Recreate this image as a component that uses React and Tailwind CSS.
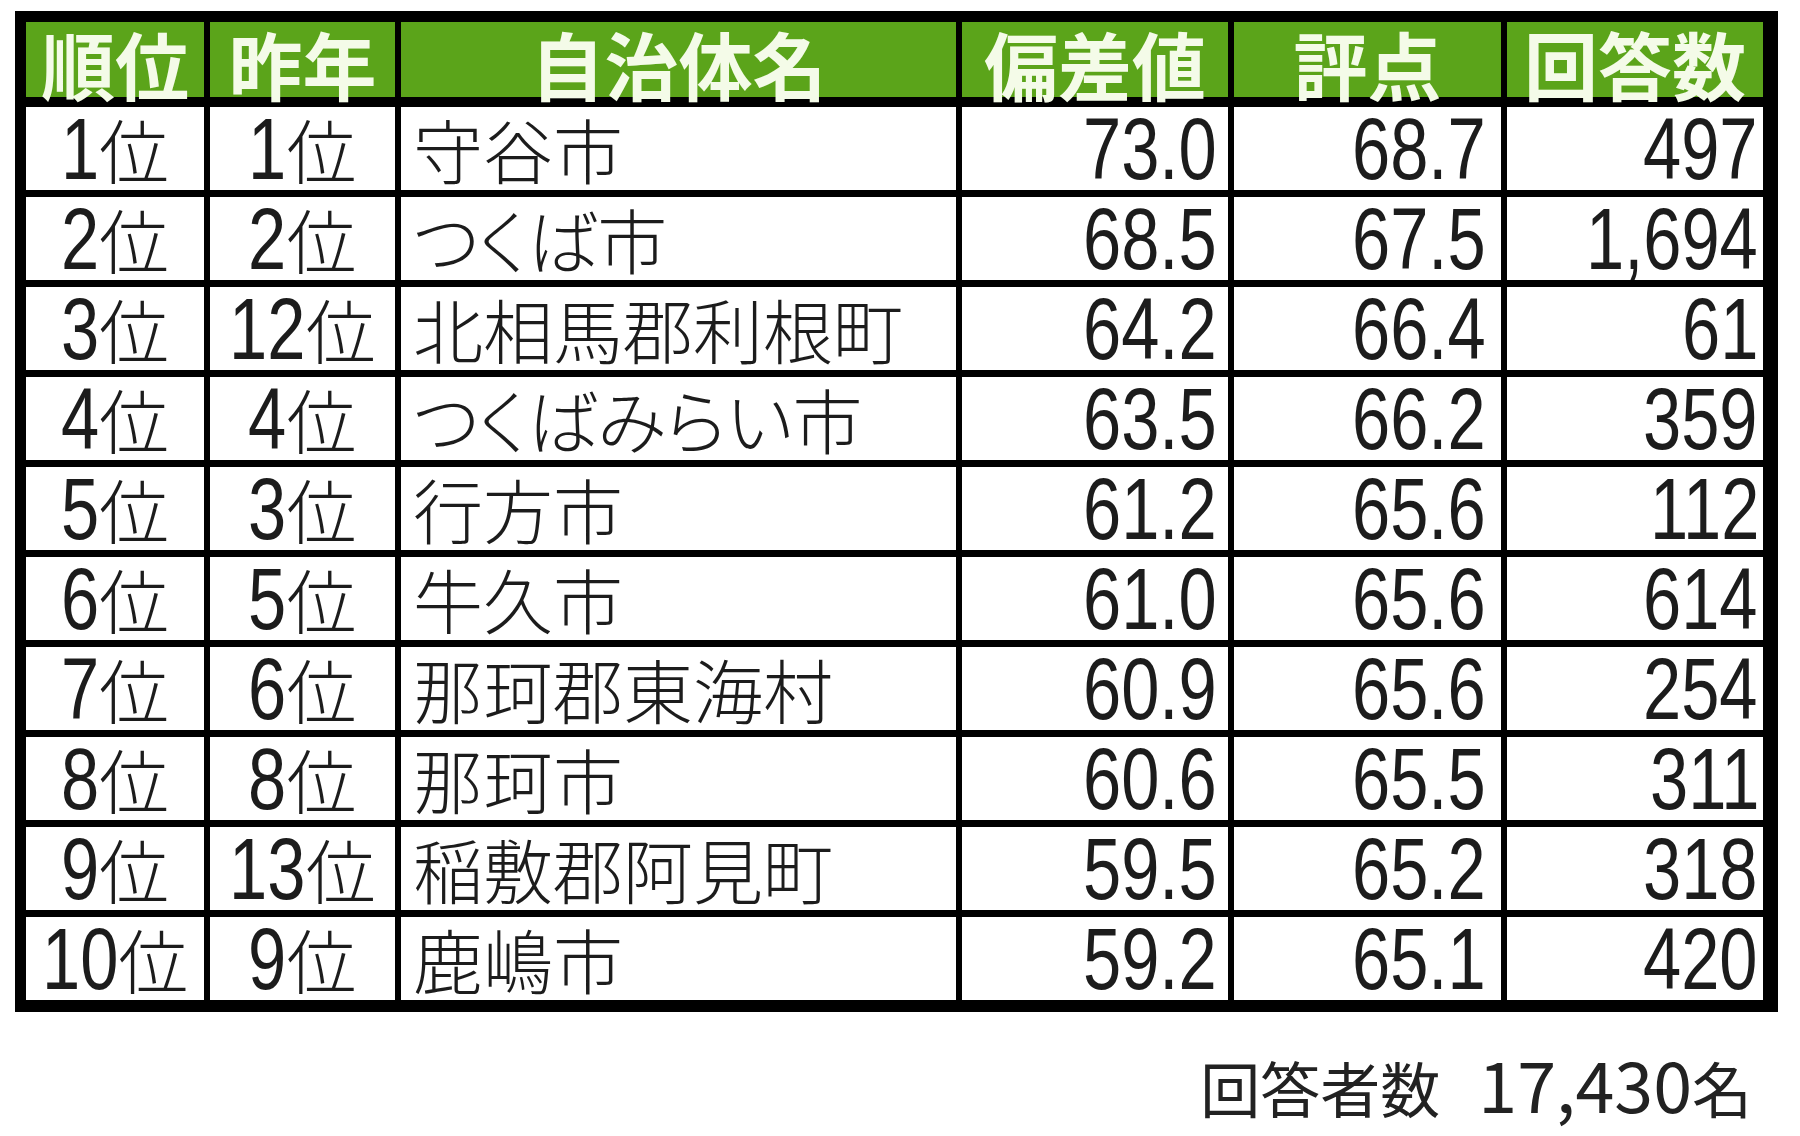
import React from 'react';

const COLS = 'grid-cols-[178px_185px_555px_266px_267px_256px]';

const HEAD = ['順位', '昨年', '自治体名', '偏差値', '評点', '回答数'];

const ROWS = [
  ['1位', '1位', '守谷市', '73.0', '68.7', '497'],
  ['2位', '2位', 'つくば市', '68.5', '67.5', '1,694'],
  ['3位', '12位', '北相馬郡利根町', '64.2', '66.4', '61'],
  ['4位', '4位', 'つくばみらい市', '63.5', '66.2', '359'],
  ['5位', '3位', '行方市', '61.2', '65.6', '112'],
  ['6位', '5位', '牛久市', '61.0', '65.6', '614'],
  ['7位', '6位', '那珂郡東海村', '60.9', '65.6', '254'],
  ['8位', '8位', '那珂市', '60.6', '65.5', '311'],
  ['9位', '13位', '稲敷郡阿見町', '59.5', '65.2', '318'],
  ['10位', '9位', '鹿嶋市', '59.2', '65.1', '420'],
];

const DIGIT_SIZE = 88;
const SQUEEZE = 0.78;

// narrow digits: Arial-width glyphs squeezed sideways, layout width corrected
function Digits({ s }) {
  const em = [...s].reduce((w, c) => w + (c === '.' || c === ',' ? 0.278 : 0.556), 0);
  const lost = em * DIGIT_SIZE * (1 - SQUEEZE);
  return (
    <span
      className="inline-block origin-left scale-x-[0.78] font-['Liberation_Sans',sans-serif] text-[88px] leading-none"
      style={{ marginRight: -lost }}
    >
      {s}
    </span>
  );
}

function Txt({ s }) {
  const parts = s.split(/([0-9.,]+)/).filter(Boolean);
  return (
    <span className="leading-none whitespace-nowrap">
      {parts.map((p, i) =>
        /^[0-9.,]+$/.test(p) ? (
          <Digits key={i} s={p} />
        ) : (
          <span
            key={i}
            className="font-['Noto_Sans_CJK_JP',sans-serif] text-[70px] font-light [font-feature-settings:'palt']"
          >
            {p}
          </span>
        )
      )}
    </span>
  );
}

const ALIGN = [
  'justify-center',
  'justify-center',
  'justify-start pl-[12px]',
  'justify-end pr-[11px]',
  'justify-end pr-[15px]',
  'justify-end pr-[5px]',
];

export default function App() {
  return (
    <div className="min-h-screen bg-white pt-[11px] pl-[15px] text-[#1c1c1c]">
      <div className="w-[1763px] border-t-[11px] border-l-[11px] border-r-[15px] border-b-[12px] border-black bg-black">
        <div className={`grid ${COLS} gap-x-[6px]`}>
          {HEAD.map((h) => (
            <div
              key={h}
              className="flex h-[75px] justify-center bg-[#5ba41a] font-['Noto_Sans_CJK_JP',sans-serif] text-[74px] font-bold leading-[81px] text-[#f4fbe8]"
            >
              {h}
            </div>
          ))}
        </div>
        <div className={`mt-[10px] grid ${COLS} gap-x-[6px] gap-y-[7px]`}>
          {ROWS.map((row, r) =>
            row.map((cell, c) => (
              <div key={`${r}-${c}`} className={`flex h-[83px] items-center bg-white ${ALIGN[c]}`}>
                <Txt s={cell} />
              </div>
            ))
          )}
        </div>
      </div>
      <div className="mt-[36px] flex w-[1763px] items-baseline justify-end pr-[26px] font-['Noto_Sans_CJK_JP',sans-serif] leading-none text-[#222]">
        <span className="text-[60px]">回答者数</span>
        <span className="ml-[38px] text-[70px]">17,430</span>
        <span className="text-[60px]">名</span>
      </div>
    </div>
  );
}
